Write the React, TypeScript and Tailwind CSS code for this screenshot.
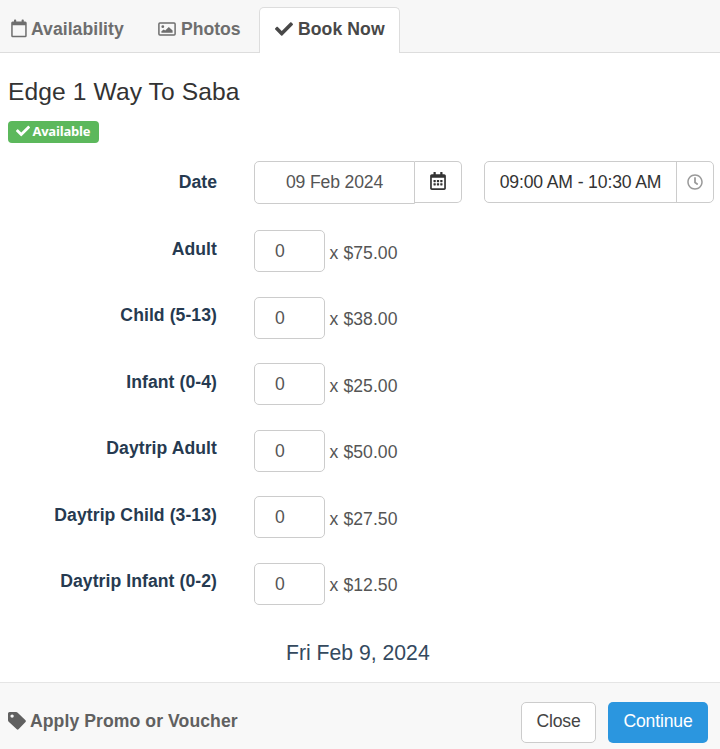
import { FaCheck, FaRegCalendarAlt, FaRegClock } from "react-icons/fa";

const fares = [
  { label: "Adult", price: "$75.00" },
  { label: "Child (5-13)", price: "$38.00" },
  { label: "Infant (0-4)", price: "$25.00" },
  { label: "Daytrip Adult", price: "$50.00" },
  { label: "Daytrip Child (3-13)", price: "$27.50" },
  { label: "Daytrip Infant (0-2)", price: "$12.50" },
];

function CalendarIcon() {
  return (
    <svg viewBox="0 0 16 19" className="h-[19px] w-[16px]" fill="currentColor">
      <path
        fillRule="evenodd"
        d="M1.6 2.6H3V1.2Q3 .4 3.8 .4H4.4Q5.2 .4 5.2 1.2V2.6H10.6V1.2Q10.6 .4 11.4 .4H12Q12.8 .4 12.8 1.2V2.6H14.2Q15.7 2.6 15.7 4.1V16.7Q15.7 18.2 14.2 18.2H1.6Q.2 18.2 .2 16.7V4.1Q.2 2.6 1.6 2.6ZM1.7 6.2V16.7H14.2V6.2Z"
      />
    </svg>
  );
}

function PhotoIcon() {
  return (
    <svg viewBox="0 0 18 14" className="h-[14px] w-[18px]" fill="currentColor">
      <rect x=".9" y=".9" width="16.2" height="12.2" rx="1" fill="none" stroke="currentColor" strokeWidth="1.5" />
      <circle cx="4.8" cy="4.7" r="1.4" />
      <path d="M3.4 10.7V9.3L5.7 7.4L7.2 8.5L10.8 4.9L14.6 8.4V10.7Z" />
    </svg>
  );
}

function TagIcon() {
  return (
    <svg viewBox="0 0 18 18" className="h-[18px] w-[18px]" fill="currentColor">
      <path
        fillRule="evenodd"
        d="M1.5 0H8.1Q9 0 9.7 .7L17.5 8.2Q18.3 9 17.5 9.9L10.5 17.3Q9.6 18.1 8.8 17.3L.7 9.8Q0 9.1 0 8.1V1.5Q0 0 1.5 0ZM4.1 2.4A1.7 1.7 0 1 0 4.1 5.8A1.7 1.7 0 1 0 4.1 2.4Z"
      />
    </svg>
  );
}

function Tabs() {
  return (
    <nav className="flex h-[53px] items-end border-b border-[#dddddd] bg-[#f7f7f7] font-bold text-[#6e6e6e]">
      <a className="flex h-[46px] w-[147px] items-center pl-[11px]">
        <span className="pb-px">
          <CalendarIcon />
        </span>
        <span className="ml-1 tracking-[0.04px]">Availability</span>
      </a>
      <a className="flex h-[46px] w-[112px] items-center pl-[11px]">
        <PhotoIcon />
        <span className="ml-[5px]">Photos</span>
      </a>
      <a className="-mb-px flex h-[46px] w-[141px] items-center rounded-t-[5px] border border-b-0 border-[#dddddd] bg-white pb-[3px] pl-[15px] text-[#484848]">
        <FaCheck className="h-[18px] w-[18px]" />
        <span className="ml-[5px] tracking-[0.08px]">Book Now</span>
      </a>
    </nav>
  );
}

function DateRow() {
  return (
    <div className="flex h-[42px] items-start">
      <label className="w-[217px] pt-[10px] text-right font-bold text-[#263a50]">Date</label>
      <div className="ml-[37px] flex items-start">
        <div className="flex h-[43px] w-[161px] items-center justify-center rounded-l-[5px] border border-[#cccccc] pb-px tracking-[-0.15px] text-[#555555]">
          09 Feb 2024
        </div>
        <button className="flex h-[42px] w-[47px] items-center justify-center rounded-r-[5px] border border-l-0 border-[#cccccc] pb-[2px] text-[#333333]">
          <FaRegCalendarAlt className="h-[18px] w-[16px]" />
        </button>
      </div>
      <div className="ml-[22px] flex h-[42px] w-[230px] rounded-[5px] border border-[#cccccc]">
        <div className="flex flex-1 items-center justify-center tracking-[-0.14px] whitespace-nowrap text-[#333333]">09:00 AM - 10:30 AM</div>
        <div className="flex w-[37px] items-center justify-center border-l border-[#cccccc] text-[#999999]">
          <FaRegClock className="h-[16px] w-[16px]" />
        </div>
      </div>
    </div>
  );
}

function FareRow({ label, price }: { label: string; price: string }) {
  return (
    <div className="flex h-[66.5px] items-start">
      <label className="w-[217px] pt-[7.6px] text-right font-bold tracking-[0.07px] text-[#263a50]">{label}</label>
      <div className="ml-[37px] flex h-[42px] w-[71px] items-center rounded-[5px] border border-[#cccccc] pl-[20px] text-[#555555]">0</div>
      <span className="ml-[4.6px] pt-[11.6px] tracking-[0.05px] text-[#555555]">x {price}</span>
    </div>
  );
}

export default function App() {
  return (
    <div className="flex h-[749px] w-[720px] flex-col overflow-hidden bg-white font-['Liberation_Sans',Arial,sans-serif] text-[17.6px] leading-[22px]">
      <Tabs />
      <main className="flex flex-1 flex-col">
        <h1 className="mt-[24px] pl-[8px] text-[24.6px] leading-[30px] tracking-[0.1px] text-[#333333]">Edge 1 Way To Saba</h1>
        <div className="mt-[14px] ml-[8px] flex h-[22px] w-[91px] items-center rounded-[4px] bg-[#5cb85c] pb-[2px] pl-[8px] text-white">
          <FaCheck className="h-[14px] w-[14px]" />
          <span className="ml-[2.5px] pb-px font-['Open_Sans',sans-serif] text-[13px] leading-[18px] font-bold tracking-[-0.25px]">Available</span>
        </div>
        <div className="mt-[18px]">
          <DateRow />
        </div>
        <div className="mt-[27px]">
          {fares.map((fare) => (
            <FareRow key={fare.label} {...fare} />
          ))}
        </div>
        <p className="mt-[11px] pl-[286px] text-[21.2px] leading-[26px] text-[#34495e]">Fri Feb 9, 2024</p>
      </main>
      <footer className="flex h-[67px] items-start border-t border-[#e5e5e5] bg-[#f8f8f8] pt-[19px] pl-[8px]">
        <a className="flex h-[38px] flex-1 items-center font-bold text-[#606060]">
          <TagIcon />
          <span className="ml-[4px] tracking-[0.08px]">Apply Promo or Voucher</span>
        </a>
        <button className="h-[41px] w-[75px] rounded-[5px] border border-[#cccccc] bg-white pb-[3px] tracking-[-0.2px] text-[#444444]">Close</button>
        <button className="mr-[12px] ml-[12px] h-[41px] w-[100px] rounded-[5px] bg-[#2b96df] pb-[3px] tracking-[-0.15px] text-white">Continue</button>
      </footer>
    </div>
  );
}
